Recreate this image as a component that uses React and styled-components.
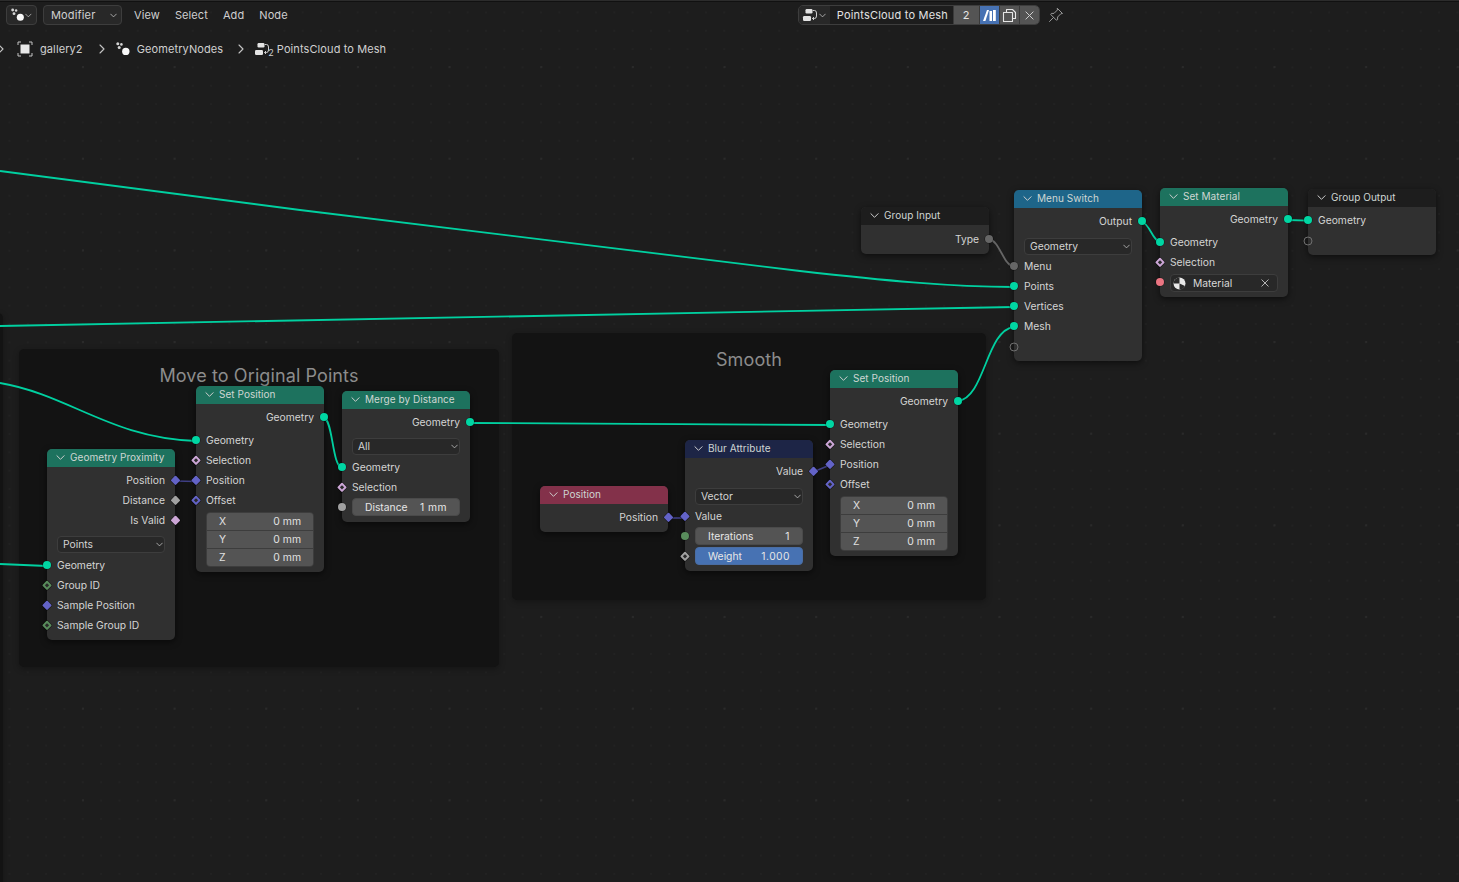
import React from 'react'
import styled, { createGlobalStyle } from 'styled-components'

const GlobalStyle = createGlobalStyle`
  html, body { margin: 0; padding: 0; background: #1d1d1d; }
  body { font-family: Inter, "Noto Sans", sans-serif; font-size: 11px; color: #d4d4d4; }
`

const Page = styled.div`
  position: relative;
  width: 1459px;
  height: 882px;
  overflow: hidden;
  background: #1d1d1d;
`

const Canvas = styled.div`
  position: absolute;
  inset: 0;
  background-image:
    radial-gradient(circle at 1px 1px, #2a2a2a 1px, transparent 1.2px),
    radial-gradient(circle at 1px 1px, #222222 1px, transparent 1.2px);
  background-size: 91.67px 91.67px, 18.33px 18.33px;
  background-position: 82px 66px, 8.5px 11.5px;
`

const TopLine = styled.div`
  position: relative;
  height: 2px;
  background: #2c2c2c;
  border-bottom: 1px solid #111;
  box-sizing: border-box;
`

const Toolbar = styled.div`
  position: relative;
  height: 20px;
  padding: 3px 0 0 6px;
  display: flex;
  align-items: center;
`

const HeaderDrop = styled.div`
  height: 20px;
  box-sizing: border-box;
  width: ${p => p.$w}px;
  margin-right: 6px;
  padding: 0 4px 0 ${p => p.$pl || 7}px;
  display: flex;
  align-items: center;
  justify-content: space-between;
  background: #282828;
  border: 1px solid #3d3d3d;
  border-radius: 4px;
  color: #d0d0d0;
  font-size: 11px;
  letter-spacing: 0.15px;
`

const Menus = styled.div`
  display: flex;
  gap: 15px;
  margin-left: 6px;
  color: #cfcfcf;
  letter-spacing: 0.1px;
`

const BlockGroup = styled.div`
  display: flex;
  align-items: center;
  margin-left: 510px;
  height: 20px;
  border: 1px solid #3d3d3d;
  border-radius: 5px;
  overflow: hidden;
  box-sizing: border-box;
  width: 242px;
`

const BlockIcon = styled.div`
  width: 31px;
  height: 100%;
  display: flex;
  align-items: center;
  justify-content: center;
  gap: 1px;
  background: #282828;
`

const BlockName = styled.div`
  flex: 1;
  height: 100%;
  padding-left: 7px;
  display: flex;
  align-items: center;
  background: #1d1d1d;
  color: #e2e2e2;
  letter-spacing: 0.2px;
`

const BlockBtn = styled.div`
  width: ${p => p.$w || 20}px;
  height: 100%;
  display: flex;
  align-items: center;
  justify-content: center;
  background: ${p => (p.$on ? '#4772b3' : '#545454')};
  color: #e6e6e6;
  border-left: 1px solid #3a3a3a;
  box-sizing: border-box;
`

const PinBtn = styled.div`
  margin-left: 8px;
  display: flex;
  color: #9a9a9a;
`

const Breadcrumbs = styled.div`
  position: relative;
  height: 20px;
  margin-top: 14px;
  display: flex;
  align-items: center;
  color: #d0d0d0;
  letter-spacing: 0.1px;
`

const Crumb = styled.div`
  display: flex;
  align-items: center;
  margin-left: ${p => p.$ml}px;
  gap: ${p => p.$gap}px;
`

const Sub = styled.span`
  font-size: 9px;
  margin: 6px -1px 0 -6px;
  color: #d0d0d0;
`

const Frame = styled.div`
  position: absolute;
  left: ${p => p.$x}px;
  top: ${p => p.$y}px;
  width: ${p => p.$w}px;
  height: ${p => p.$h}px;
  background: #131313;
  border-radius: 5px;
  box-shadow: 0 2px 6px rgba(0, 0, 0, 0.3);
`

const FrameTitle = styled.div`
  text-align: center;
  color: #8c8c8c;
  font-size: 18px;
  letter-spacing: 0.1px;
  padding-top: ${p => p.$pt}px;
`

const Wires = styled.svg`
  position: absolute;
  left: 0;
  top: 0;
`

const Node = styled.div`
  position: absolute;
  left: ${p => p.$x}px;
  top: ${p => p.$y}px;
  width: 128px;
  background: #303030;
  border-radius: 5px;
  padding-bottom: 5px;
  box-shadow: 0 2px 6px rgba(0, 0, 0, 0.55);
`

const NodeHeader = styled.div`
  height: 18px;
  box-sizing: border-box;
  margin-bottom: 3px;
  padding: 0 0 2px 9px;
  display: flex;
  align-items: center;
  gap: 5px;
  background: ${p => p.$color};
  border-radius: 5px 5px 0 0;
  color: #cfd6d3;
  font-size: 10px;
  letter-spacing: 0.05px;
  white-space: nowrap;
`

const Row = styled.div`
  position: relative;
  height: 20px;
  padding: 0 10px;
  display: flex;
  align-items: center;
  justify-content: ${p => (p.$out ? 'flex-end' : 'flex-start')};
  color: #d4d4d4;
  font-size: 10.3px;
`

const Gap = styled.div`
  height: ${p => p.$h}px;
`

const Select = styled.div`
  height: 17px;
  margin: 0 10px;
  padding: 0 1px 1px 5px;
  box-sizing: border-box;
  display: flex;
  align-items: center;
  justify-content: space-between;
  background: #282828;
  border: 1px solid #3d3d3d;
  border-radius: 4px;
  color: #d4d4d4;
  font-size: 10.3px;
`

const Fields = styled.div`
  margin: 0 10px;
  border: 1px solid #3d3d3d;
  border-radius: 4px;
  overflow: hidden;
  background: #3d3d3d;
  display: grid;
  row-gap: 1px;
`

const FieldRow = styled.div`
  height: 17px;
  padding: 0 12px;
  display: flex;
  align-items: center;
  justify-content: space-between;
  background: #545454;
  color: #e0e0e0;
  font-size: 10.4px;
`

const Slider = styled.div`
  flex: 1;
  height: 18px;
  padding: 0 12px;
  display: flex;
  align-items: center;
  justify-content: space-between;
  background: ${p => (p.$on ? '#4772b3' : '#545454')};
  border: 1px solid ${p => (p.$on ? '#4a6da3' : '#4a4a4a')};
  border-radius: 4px;
  box-sizing: border-box;
  color: #e6e6e6;
  font-size: 10.3px;
`

const SliderValue = styled.span`
  letter-spacing: 0.45px;
`

const MaterialField = styled.div`
  flex: 1;
  height: 18px;
  margin-top: 2px;
  padding: 0 8px 0 2px;
  display: flex;
  align-items: center;
  background: #282828;
  border: 1px solid #3d3d3d;
  border-radius: 4px;
  box-sizing: border-box;
  color: #d8d8d8;
  gap: 7px;
`

const Spread = styled.span`
  flex: 1;
`

const socketColors = {
  geometry: '#00d6a3',
  vector: '#6363c7',
  bool: '#cca6d6',
  float: '#a1a1a1',
  int: '#598c5c',
  material: '#eb7582',
  menu: '#666666',
  virtual: 'transparent',
}

const Socket = styled.i`
  position: absolute;
  top: ${p => (p.$kind === 'virtual' ? 'calc(50% + 1px)' : '50%')};
  ${p => (p.$out ? 'right: 0;' : 'left: 0;')}
  width: ${p => (p.$diamond ? 6.5 : p.$kind === 'virtual' ? 9 : 8)}px;
  height: ${p => (p.$diamond ? 6.5 : p.$kind === 'virtual' ? 9 : 8)}px;
  box-sizing: border-box;
  transform: ${p => (p.$out ? 'translate(50%, -50%)' : 'translate(-50%, -50%)')} ${p => (p.$diamond ? 'rotate(45deg)' : '')};
  border-radius: ${p => (p.$diamond ? '1px' : '50%')};
  background: ${p => socketColors[p.$kind]};
  border: ${p => (p.$kind === 'virtual' ? '1px solid #6f6f6f' : 'none')};
  box-shadow: ${p => (p.$kind === 'virtual' ? 'none' : '0 0 0 0.6px rgba(0, 0, 0, 0.45)')};

  &::after {
    content: ${p => (p.$dot ? '""' : 'none')};
    position: absolute;
    left: 2px;
    top: 2px;
    width: 2.5px;
    height: 2.5px;
    background: #2a2a2a;
  }
`

const Chevron = ({ size = 9, color = '#cfcfcf' }) => (
  <svg width={size} height={size} viewBox="0 0 10 10" fill="none" stroke={color} strokeWidth="1.1" strokeLinecap="round" strokeLinejoin="round">
    <path d="M1 3 L5 7 L9 3" />
  </svg>
)

const SmallChevron = () => <Chevron size={7} color="#c8c8c8" />

const NextArrow = () => (
  <svg width="8" height="10" viewBox="0 0 8 10" fill="none" stroke="#c4c4c4" strokeWidth="1.1" strokeLinecap="round" strokeLinejoin="round">
    <path d="M2 1 L6 5 L2 9" />
  </svg>
)

const CloseX = ({ size = 9, color = '#cfcfcf' }) => (
  <svg width={size} height={size} viewBox="0 0 10 10" fill="none" stroke={color} strokeWidth="1.1" strokeLinecap="round">
    <path d="M1 1 L9 9 M9 1 L1 9" />
  </svg>
)

const NodesIcon = () => (
  <svg width="16" height="16" viewBox="0 0 16 16" fill="#d4d4d4">
    <circle cx="2.8" cy="2.8" r="1.5" />
    <circle cx="6.4" cy="3.4" r="1.3" />
    <circle cx="4.2" cy="6.6" r="1.5" />
    <circle cx="10.8" cy="10.4" r="3.7" fill="#f8f8f8" />
  </svg>
)

const ObjectIcon = () => (
  <svg width="16" height="16" viewBox="0 0 16 16" fill="none" stroke="#c4c4c4" strokeWidth="1">
    <path d="M1 4 V1 H4 M12 1 H15 V4 M15 12 V15 H12 M4 15 H1 V12" />
    <rect x="3.5" y="3.5" width="9" height="9" fill="#e8e8e8" stroke="none" />
  </svg>
)

const GroupIcon = () => (
  <svg width="16" height="15" viewBox="0 0 16 15" fill="none">
    <rect x="3.5" y="1" width="7" height="4.4" rx="1.2" fill="#e4e4e4" />
    <rect x="1" y="8" width="8" height="5" rx="1.2" fill="#e4e4e4" />
    <path d="M11 2.5 H12.5 Q14.5 2.5 14.5 5 V8 Q14.5 10.5 12.5 10.5 H10.5 M12 9 L10.5 10.5 L12 12" stroke="#cfcfcf" strokeWidth="1" />
  </svg>
)

const FakeUserIcon = () => (
  <svg width="15" height="15" viewBox="0 0 15 15" fill="#ffffff">
    <path d="M1 13 L5 2 H7 L3.4 13 Z" />
    <rect x="7.5" y="3" width="2.5" height="10" />
    <rect x="11" y="2" width="2.8" height="11" />
  </svg>
)

const CopyIcon = () => (
  <svg width="15" height="15" viewBox="0 0 15 15" fill="none" stroke="#e6e6e6" strokeWidth="1.1" strokeLinejoin="round">
    <path d="M4.5 4 V1.5 H10.5 L13.5 4.5 V10.5 H10.5" />
    <path d="M1.5 4.5 H10.5 V13.5 H1.5 Z" />
  </svg>
)

const PinIcon = () => (
  <svg width="16" height="16" viewBox="0 0 16 16" fill="none" stroke="currentColor" strokeWidth="1" strokeLinejoin="round" strokeLinecap="round">
    <path d="M9.5 1.5 L14.5 6.5 L12.8 6.8 L9.6 10 L9.6 12.6 L8.4 13.2 L2.8 7.6 L3.4 6.4 L6 6.4 L9.2 3.2 Z" />
    <path d="M5.5 10.5 L1.5 14.5" />
  </svg>
)

const SphereIcon = () => (
  <svg width="13" height="13" viewBox="0 0 13 13">
    <circle cx="6.5" cy="6.5" r="6" fill="#e8e8e8" />
    <path d="M6.5 0.5 A6 6 0 0 0 0.5 6.5 H6.5 Z" fill="#2a2a2a" />
    <path d="M6.5 6.5 L12 9 A6 6 0 0 1 6.5 12.5 Z" fill="#2a2a2a" />
  </svg>
)

const GREEN = '#1d725e'

const setPositionRows = [
  { type: 'out', label: 'Geometry', socket: 'geometry' },
  { type: 'gap', h: 3 },
  { type: 'in', label: 'Geometry', socket: 'geometry' },
  { type: 'in', label: 'Selection', socket: 'bool', dot: true },
  { type: 'in', label: 'Position', socket: 'vector', dot: true, solid: true },
  { type: 'in', label: 'Offset', socket: 'vector', dot: true },
  { type: 'gap', h: 2 },
  { type: 'xyz' },
]

const nodes = [
  {
    title: 'Group Input', x: 861, y: 207, color: '#1d1d1d',
    rows: [{ type: 'gap', h: 1 }, { type: 'out', label: 'Type', socket: 'menu' }],
  },
  {
    title: 'Menu Switch', x: 1014, y: 190, color: '#1e6589',
    rows: [
      { type: 'out', label: 'Output', socket: 'geometry' },
      { type: 'gap', h: 7 },
      { type: 'select', label: 'Geometry' },
      { type: 'gap', h: 1 },
      { type: 'in', label: 'Menu', socket: 'menu' },
      { type: 'in', label: 'Points', socket: 'geometry' },
      { type: 'in', label: 'Vertices', socket: 'geometry' },
      { type: 'in', label: 'Mesh', socket: 'geometry' },
      { type: 'in', label: '', socket: 'virtual' },
    ],
  },
  {
    title: 'Set Material', x: 1160, y: 188, color: GREEN,
    rows: [
      { type: 'out', label: 'Geometry', socket: 'geometry' },
      { type: 'gap', h: 3 },
      { type: 'in', label: 'Geometry', socket: 'geometry' },
      { type: 'in', label: 'Selection', socket: 'bool', dot: true },
      { type: 'material' },
    ],
  },
  {
    title: 'Group Output', x: 1308, y: 189, color: '#1d1d1d',
    rows: [
      { type: 'in', label: 'Geometry', socket: 'geometry' },
      { type: 'in', label: '', socket: 'virtual' },
    ],
  },
  { title: 'Set Position', x: 196, y: 386, color: GREEN, rows: setPositionRows },
  {
    title: 'Merge by Distance', x: 342, y: 391, color: GREEN,
    rows: [
      { type: 'out', label: 'Geometry', socket: 'geometry' },
      { type: 'gap', h: 6 },
      { type: 'select', label: 'All' },
      { type: 'gap', h: 2 },
      { type: 'in', label: 'Geometry', socket: 'geometry' },
      { type: 'in', label: 'Selection', socket: 'bool', dot: true },
      { type: 'slider', label: 'Distance', value: '1 mm', socket: 'float' },
    ],
  },
  {
    title: 'Geometry Proximity', x: 47, y: 449, color: GREEN,
    rows: [
      { type: 'out', label: 'Position', socket: 'vector' },
      { type: 'out', label: 'Distance', socket: 'float' },
      { type: 'out', label: 'Is Valid', socket: 'bool' },
      { type: 'gap', h: 6 },
      { type: 'select', label: 'Points' },
      { type: 'gap', h: 2 },
      { type: 'in', label: 'Geometry', socket: 'geometry' },
      { type: 'in', label: 'Group ID', socket: 'int', dot: true },
      { type: 'in', label: 'Sample Position', socket: 'vector' },
      { type: 'in', label: 'Sample Group ID', socket: 'int', dot: true },
    ],
  },
  { title: 'Set Position', x: 830, y: 370, color: GREEN, rows: setPositionRows },
  {
    title: 'Blur Attribute', x: 685, y: 440, color: '#1d2546',
    rows: [
      { type: 'out', label: 'Value', socket: 'vector' },
      { type: 'gap', h: 7 },
      { type: 'select', label: 'Vector' },
      { type: 'gap', h: 1 },
      { type: 'in', label: 'Value', socket: 'vector' },
      { type: 'slider', label: 'Iterations', value: '1', socket: 'int', circle: true },
      { type: 'slider', label: 'Weight', value: '1.000', socket: 'float', dot: true, on: true },
    ],
  },
  {
    title: 'Position', x: 540, y: 486, color: '#83314a',
    rows: [{ type: 'out', label: 'Position', socket: 'vector' }],
  },
]

const isRound = row => ['geometry', 'material', 'menu', 'virtual'].includes(row.socket) || row.circle || (row.socket === 'float' && !row.dot && row.type === 'slider')

const NodeRow = ({ row }) => {
  if (row.type === 'gap') return <Gap $h={row.h} />
  if (row.type === 'select') {
    return (
      <Select>
        {row.label}
        <SmallChevron />
      </Select>
    )
  }
  if (row.type === 'xyz') {
    return (
      <Fields>
        {['X', 'Y', 'Z'].map(axis => (
          <FieldRow key={axis}>
            <span>{axis}</span>
            <span>0 mm</span>
          </FieldRow>
        ))}
      </Fields>
    )
  }
  if (row.type === 'material') {
    return (
      <Row>
        <Socket $kind="material" />
        <MaterialField>
          <SphereIcon />
          Material
          <Spread />
          <CloseX size={8} color="#c8c8c8" />
        </MaterialField>
      </Row>
    )
  }
  const socket = (
    <Socket
      $kind={row.socket}
      $out={row.type === 'out'}
      $diamond={!isRound(row)}
      $dot={row.dot && !row.solid}
    />
  )
  if (row.type === 'slider') {
    return (
      <Row>
        {socket}
        <Slider $on={row.on}>
          <span>{row.label}</span>
          <SliderValue>{row.value}</SliderValue>
        </Slider>
      </Row>
    )
  }
  return (
    <Row $out={row.type === 'out'}>
      {socket}
      {row.label}
    </Row>
  )
}

const wires = [
  { d: 'M0 171 L300 210 L800 271 C880 280 950 287 1014 287', color: '#00d0a0', w: 1.8 },
  { d: 'M0 326 L1014 307', color: '#00d0a0', w: 1.8 },
  { d: 'M958 401 C985 398 986 330 1014 327', color: '#00d0a0', w: 1.8 },
  { d: 'M1142 222 C1150 224 1152 240 1160 242', color: '#00d0a0', w: 1.8 },
  { d: 'M1288 220 L1308 220.7', color: '#00d0a0', w: 1.8 },
  { d: 'M989 239 C1000 241 1003 265 1014 267', color: '#666666', w: 1.8 },
  { d: 'M0 383 C70 395 110 438 196 441', color: '#00d0a0', w: 1.8 },
  { d: 'M0 564 L47 566', color: '#00d0a0', w: 1.8 },
  { d: 'M175 481 L196 481.5', color: '#3f3f85', w: 1.6 },
  { d: 'M324 418 C333 420 332 466 342 468', color: '#00d0a0', w: 1.8 },
  { d: 'M470 423 L830 425', color: '#00d0a0', w: 1.8 },
  { d: 'M668 518 L685 518', color: '#3f3f85', w: 1.6 },
  { d: 'M813 472 L830 465', color: '#3f3f85', w: 1.6 },
]

export default function App() {
  return (
    <Page>
      <GlobalStyle />
      <Canvas>
        <Frame $x={-400} $y={313} $w={403} $h={700} />
        <Frame $x={19} $y={349} $w={480} $h={318}>
          <FrameTitle $pt={16}>Move to Original Points</FrameTitle>
        </Frame>
        <Frame $x={512} $y={333} $w={474} $h={267}>
          <FrameTitle $pt={16}>Smooth</FrameTitle>
        </Frame>
        <Wires width="1459" height="882" fill="none">
          {wires.map(wire => (
            <path key={wire.d} d={wire.d} stroke={wire.color} strokeWidth={wire.w} />
          ))}
        </Wires>
        {nodes.map(node => (
          <Node key={node.title + node.x} $x={node.x} $y={node.y}>
            <NodeHeader $color={node.color}>
              <Chevron />
              {node.title}
            </NodeHeader>
            {node.rows.map((row, i) => (
              <NodeRow key={i} row={row} />
            ))}
          </Node>
        ))}
      </Canvas>

      <TopLine />
      <Toolbar>
        <HeaderDrop $w={31} $pl={3}>
          <NodesIcon />
          <SmallChevron />
        </HeaderDrop>
        <HeaderDrop $w={79}>
          Modifier
          <SmallChevron />
        </HeaderDrop>
        <Menus>
          <span>View</span>
          <span>Select</span>
          <span>Add</span>
          <span>Node</span>
        </Menus>
        <BlockGroup>
          <BlockIcon>
            <GroupIcon />
            <SmallChevron />
          </BlockIcon>
          <BlockName>PointsCloud to Mesh</BlockName>
          <BlockBtn $w={26}>2</BlockBtn>
          <BlockBtn $on>
            <FakeUserIcon />
          </BlockBtn>
          <BlockBtn>
            <CopyIcon />
          </BlockBtn>
          <BlockBtn>
            <CloseX />
          </BlockBtn>
        </BlockGroup>
        <PinBtn>
          <PinIcon />
        </PinBtn>
      </Toolbar>
      <Breadcrumbs>
        <Crumb $ml={-3} $gap={0}>
          <NextArrow />
        </Crumb>
        <Crumb $ml={12} $gap={7}>
          <ObjectIcon />
          gallery2
        </Crumb>
        <Crumb $ml={15} $gap={0}>
          <NextArrow />
        </Crumb>
        <Crumb $ml={9} $gap={6}>
          <NodesIcon />
          GeometryNodes
        </Crumb>
        <Crumb $ml={14} $gap={0}>
          <NextArrow />
        </Crumb>
        <Crumb $ml={9} $gap={4}>
          <GroupIcon />
          <Sub>2</Sub>
          PointsCloud to Mesh
        </Crumb>
      </Breadcrumbs>
    </Page>
  )
}
